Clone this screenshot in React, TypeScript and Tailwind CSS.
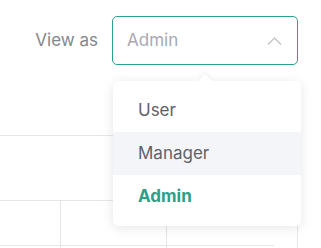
import { useState } from "react";

const roles = ["User", "Manager", "Admin"];

export default function App() {
  const [selected, setSelected] = useState("Admin");
  const [hovered, setHovered] = useState("Manager");

  return (
    <div
      className="relative w-[321px] h-[248px] overflow-hidden bg-white"
      style={{ fontFamily: "Inter, 'Noto Sans', sans-serif" }}
    >
      {/* View as selector */}
      <div className="flex items-center justify-end gap-[14px] pt-[16px] pr-[23px]">
        <span className="text-[17px] text-[#85868c]">View as</span>
        <button className="flex h-[49px] w-[186px] items-center justify-between rounded-[5px] border border-[#2fa08f] pl-[14px] pr-[15px] text-left">
          <span className="text-[17px] text-[#a9a9b0]">{selected}</span>
          <svg width="15" height="8" viewBox="0 0 15 8" fill="none">
            <path d="M1 7.5L7.5 1L14 7.5" stroke="#bdbdc2" strokeWidth="1.1" />
          </svg>
        </button>
      </div>

      {/* Table behind */}
      <div className="mt-[70px] w-[298px] border-t border-[#e6e6ea]">
        <div className="h-[65px] border-b border-[#e6e6ea]" />
        <div className="flex h-[44px]">
          <div className="w-[61px] border-r border-[#e6e6ea]" />
          <div className="w-[106px] border-r border-[#e6e6ea]" />
          <div className="w-[131px] border-r border-[#e6e6ea]" />
        </div>
        <div className="flex h-[10px]">
          <div className="w-[61px] border-t border-r border-[#e6e6ea]" />
          <div className="w-[106px] border-t border-r border-[#e6e6ea]" />
          <div className="w-[131px] border-r border-[#e6e6ea]">
            <div className="w-[107px] border-t border-[#e6e6ea]" />
          </div>
        </div>
      </div>

      {/* Dropdown menu */}
      <div className="absolute left-[113px] top-[81px] w-[188px] rounded-[5px] bg-white py-[8px] shadow-[0_2px_12px_rgba(0,0,0,0.1)]">
        <div className="absolute left-[87px] top-[-5px] h-[10px] w-[10px] rotate-45 bg-white shadow-[-2px_-2px_4px_rgba(0,0,0,0.04)]" />
        {roles.map((role) => (
          <div
            key={role}
            onClick={() => setSelected(role)}
            onMouseEnter={() => setHovered(role)}
            className={`relative flex h-[43px] items-center pl-[25px] text-[17px] ${
              hovered === role && role !== selected ? "bg-[#f4f5f9]" : ""
            } ${
              role === selected
                ? "font-bold text-[#2e9e87]"
                : "text-[#606168]"
            }`}
          >
            {role}
          </div>
        ))}
      </div>
    </div>
  );
}
